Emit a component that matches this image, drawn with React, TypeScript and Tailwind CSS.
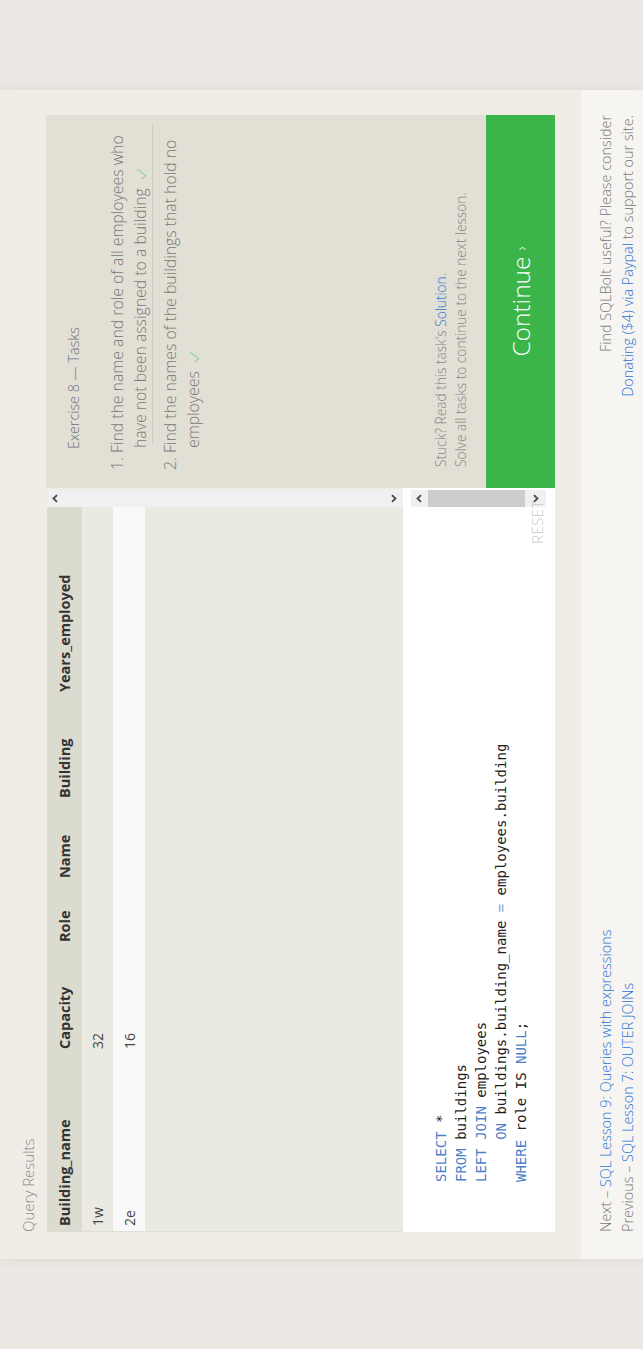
import React from 'react';

const columns = ['Building_name', 'Capacity', 'Role', 'Name', 'Building', 'Years_employed'];
const rows = [
  ['1w', '32', '', '', '', ''],
  ['2e', '16', '', '', '', ''],
];

function Chevron({ dir }: { dir: 'up' | 'down' }) {
  return (
    <svg width="9" height="6" viewBox="0 0 9 6" className="block">
      {dir === 'up' ? (
        <path d="M1.2 5 L4.5 1.5 L7.8 5" fill="none" stroke="#4a4a4a" strokeWidth="1.8" />
      ) : (
        <path d="M1.2 1 L4.5 4.5 L7.8 1" fill="none" stroke="#4a4a4a" strokeWidth="1.8" />
      )}
    </svg>
  );
}

function Check() {
  return (
    <svg width="12" height="11" viewBox="0 0 12 11" className="inline-block ml-[8px] align-[-1px]">
      <path d="M1 6 L4.5 9.5 L11 1" fill="none" stroke="#95d4a3" strokeWidth="1.3" />
    </svg>
  );
}

function Results() {
  return (
    <div className="h-[356px] w-[742px] flex">
      <div className="w-[725px] bg-[#eaeae2] border-l border-[#dfded5]">
        <div className="grid grid-cols-[177px_107px_64px_80px_106px_1fr] h-[35px] bg-[#dbdbd0] items-center text-[14.5px] font-bold text-[#333]">
          {columns.map((c) => (
            <div key={c} className="pl-[5px]">{c}</div>
          ))}
        </div>
        {rows.map((r, i) => (
          <div
            key={i}
            className={
              i === 0
                ? 'grid grid-cols-[177px_107px_64px_80px_106px_1fr] h-[31px] bg-[#eaeae2] items-center text-[14px] text-[#444]'
                : 'grid grid-cols-[177px_107px_64px_80px_106px_1fr] h-[32px] bg-[#f9f9f9] items-center text-[14px] text-[#444]'
            }
          >
            {r.map((v, j) => (
              <div key={j} className="pl-[5px]">{v}</div>
            ))}
          </div>
        ))}
      </div>
      <div className="w-[17px] bg-[#f0f0f0] flex flex-col items-center justify-between pt-[5px] pb-[6px]">
        <Chevron dir="up" />
        <Chevron dir="down" />
      </div>
    </div>
  );
}

function Editor() {
  const kw = 'text-[#4d7fc9]';
  return (
    <div className="relative h-[152px] w-[744px] bg-white pt-[28px] pl-[50px]">
      <pre className="font-['DejaVu_Sans_Mono',monospace] text-[14px] leading-[20px] text-[#1e1e1e]">
        <span className={kw}>SELECT</span> *{'\n'}
        <span className={kw}>FROM</span> buildings{'\n'}
        <span className={kw}>LEFT JOIN</span> employees{'\n'}
        {'     '}<span className={kw}>ON</span> buildings.building_name <span className="text-[#8aa3cc]">=</span> employees.building{'\n'}
        <span className={kw}>WHERE</span> role IS <span className={kw}>NULL</span>;
      </pre>
      <div className="absolute right-[2px] top-[8px] w-[17px] h-[135px] bg-[#f0f0f0] flex flex-col items-center pt-[5px]">
        <Chevron dir="up" />
        <div className="mt-[6px] w-[17px] h-[97px] bg-[#cdcdcd]" />
        <div className="mt-[8px]">
          <Chevron dir="down" />
        </div>
      </div>
      <div className="absolute right-[12px] bottom-[8px] text-[15px] leading-[20px] font-light tracking-[0.5px] text-[#c9c9c9]">
        RESET
      </div>
    </div>
  );
}

function Tasks() {
  return (
    <div className="h-[440px] bg-[#e2dfd4] pt-[18px] pl-[18px] pr-[10px] pb-[15px] flex flex-col">
      <div className="pl-[21px] text-[14.3px] leading-[20px] font-light text-[#6b7386]">Exercise 8 — Tasks</div>
      <ol className="mt-[22px] text-[15.8px] leading-[23px] font-light text-[#787878]">
        <li className="pl-[22px] indent-[-22px]">
          1. Find the name and role of all employees who
          <br />
          have not been assigned to a building
          <Check />
        </li>
        <li className="ml-[27px] h-px bg-[#cdcabf]" />
        <li className="pt-[6px] pl-[22px] indent-[-22px]">
          2. Find the names of the buildings that hold no
          <br />
          employees
          <Check />
        </li>
      </ol>
      <div className="mt-auto pl-[3px] text-[13.7px] leading-[20px] font-light text-[#858585]">
        <div>
          Stuck? Read this task's <span className="text-[#2d74d8]">Solution</span>.
        </div>
        <div>Solve all tasks to continue to the next lesson.</div>
      </div>
    </div>
  );
}

export default function App() {
  return (
    <div className="w-[643px] h-[1349px] overflow-hidden bg-[#ece8e4]">
      <div className="w-[1349px] h-[643px] origin-top-left -rotate-90 translate-y-[1349px] flex justify-center bg-[#ece8e4] font-['Open_Sans',sans-serif]">
        <div className="w-[1169px] flex flex-col shadow-[0_0_12px_rgba(0,0,0,0.08)]">
          <main className="h-[581px] shrink-0 bg-[#f0ede6] flex pl-[27px]">
            <section className="w-[744px] flex flex-col">
              <div className="h-[47px] pt-[18px] text-[15px] leading-[20px] font-light text-[#8a8a8a]">Query Results</div>
              <Results />
              <Editor />
            </section>
            <aside className="w-[373px] mt-[46px] flex flex-col">
              <Tasks />
              <button className="h-[69px] bg-[#3bb54a] text-white flex items-center justify-center font-light">
                <span className="text-[24.5px] leading-[30px]">Continue</span>
                <span className="ml-[6px] text-[16px] leading-[20px]">›</span>
              </button>
            </aside>
          </main>
          <footer className="flex-1 bg-[#f6f5f1] flex justify-between pl-[27px] pr-[25px] pt-[14px] text-[14.4px] leading-[22px] font-light text-[#777]">
            <div>
              <div>
                Next – <span className="text-[#2d74d8]">SQL Lesson 9: Queries with expressions</span>
              </div>
              <div>
                Previous – <span className="text-[#2d74d8]">SQL Lesson 7: OUTER JOINs</span>
              </div>
            </div>
            <div className="text-right">
              <div>Find SQLBolt useful? Please consider</div>
              <div>
                <span className="text-[#2d74d8]">Donating ($4) via Paypal</span> to support our site.
              </div>
            </div>
          </footer>
        </div>
      </div>
    </div>
  );
}
